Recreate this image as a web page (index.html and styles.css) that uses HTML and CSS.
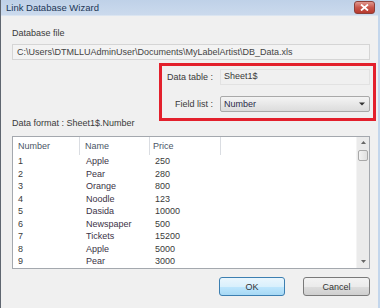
FILE: index.html
```html
<!DOCTYPE html>
<html lang="en">
<head>
    <meta charset="UTF-8">
    <title>Link Database Wizard</title>
    <link rel="stylesheet" href="styles.css">
</head>
<body>
    <div class="window">
        <!-- Title bar -->
        <div class="titlebar">
            <span class="title">Link Database Wizard</span>
            <span class="close-btn">
                <svg width="9" height="7" viewBox="0 0 9 7">
                    <path d="M1 0.5 L8 6.5 M8 0.5 L1 6.5" stroke="#fff" stroke-width="1.8"/>
                </svg>
            </span>
        </div>

        <div class="content">
            <div class="label">Database file</div>
            <div class="path-field">C:\Users\DTMLLUAdminUser\Documents\MyLabelArtist\DB_Data.xls</div>

            <!-- Source fields (highlighted) -->
            <div class="source-group">
                <div class="highlight"></div>
                <div class="form-row">
                    <label>Data table :</label>
                    <div class="text-field">Sheet1$</div>
                </div>
                <div class="form-row">
                    <label>Field list :</label>
                    <div class="select">
                        <span>Number</span>
                        <svg width="6" height="4" viewBox="0 0 6 4">
                            <path d="M0 0.5 H6 L3 3.5 Z" fill="#333"/>
                        </svg>
                    </div>
                </div>
            </div>

            <div class="label format-label">Data format : Sheet1$.Number</div>

            <!-- List view -->
            <div class="list-view">
                <div class="list-body">
                    <div class="list-header">
                        <div>Number</div>
                        <div>Name</div>
                        <div>Price</div>
                        <div></div>
                    </div>
                    <div id="rows"></div>
                </div>
                <div class="scrollbar">
                    <svg class="arrow-up" width="5" height="3" viewBox="0 0 5 3"><path d="M0 3 H5 L2.5 0 Z" fill="#666"/></svg>
                    <div class="thumb"></div>
                    <svg class="arrow-down" width="5" height="3" viewBox="0 0 5 3"><path d="M0 0 H5 L2.5 3 Z" fill="#666"/></svg>
                </div>
            </div>

            <div class="buttons">
                <button class="btn btn-default">OK</button>
                <button class="btn">Cancel</button>
            </div>
        </div>
    </div>

    <script>
        const data = [
            [1, 'Apple', 250],
            [2, 'Pear', 280],
            [3, 'Orange', 800],
            [4, 'Noodle', 123],
            [5, 'Dasida', 10000],
            [6, 'Newspaper', 500],
            [7, 'Tickets', 15200],
            [8, 'Apple', 5000],
            [9, 'Pear', 3000]
        ];

        document.getElementById('rows').innerHTML = data.map(row => `
            <div class="list-row">
                <div>${row[0]}</div>
                <div class="name">${row[1]}</div>
                <div class="price">${row[2]}</div>
                <div></div>
            </div>
        `).join('');
    </script>
</body>
</html>
```

FILE: styles.css
```css
* {
    box-sizing: border-box;
    margin: 0;
    padding: 0;
}

body {
    font-family: 'Liberation Sans', Arial, sans-serif;
    font-size: 9px;
    color: #3a3a3a;
    background-color: #f0f0f0;
}

.window {
    width: 380px;
    height: 308px;
    display: flex;
    flex-direction: column;
    border-left: 1px solid #5f6670;
    border-right: 2px solid #c3d6ec;
    background-color: #f0f0f0;
}

/* Title bar */
.titlebar {
    height: 16px;
    display: flex;
    align-items: center;
    justify-content: space-between;
    padding: 0 3px 0 5px;
    background: linear-gradient(#bfd1e8, #cbdaed);
    border-bottom: 1px solid #dbe5f1;
}

.title {
    color: #1c3657;
    font-size: 9.5px;
}

.close-btn {
    width: 21px;
    height: 13px;
    display: flex;
    align-items: center;
    justify-content: center;
    border: 1px solid #8d3f38;
    border-radius: 3px;
    background: linear-gradient(#e0988f, #c8564b 50%, #b7392e);
}

/* Content */
.content {
    flex: 1;
    display: flex;
    flex-direction: column;
    padding: 11px 8px 0 11px;
}

.label {
    height: 12px;
    line-height: 12px;
}

.path-field {
    margin-top: 5px;
    height: 16px;
    line-height: 14px;
    padding-left: 4px;
    border: 1px solid #d5d5d5;
    background-color: #f3f3f3;
    color: #444;
    white-space: nowrap;
    overflow: hidden;
}

.source-group {
    position: relative;
    display: flex;
    flex-direction: column;
    gap: 11px;
    padding-top: 9px;
}

.highlight {
    position: absolute;
    top: 3px;
    left: 147px;
    right: -6px;
    height: 58px;
    border: 3px solid #e3202c;
}

.form-row {
    display: flex;
    justify-content: flex-end;
    align-items: center;
    gap: 7px;
    height: 16px;
}

.text-field {
    width: 150px;
    height: 16px;
    line-height: 12px;
    padding-left: 3px;
    border: 1px solid #e2e2e2;
    background-color: #f0f0f0;
}

.select {
    width: 150px;
    height: 16px;
    display: flex;
    align-items: center;
    justify-content: space-between;
    padding: 0 4px 0 3px;
    border: 1px solid #a9a9a9;
    border-radius: 2px;
    background: linear-gradient(#f4f4f4, #dcdcdc);
    color: #2b2b4a;
}

.format-label {
    margin-top: 5px;
}

/* List view */
.list-view {
    margin-top: 7px;
    height: 133px;
    display: flex;
    border: 1px solid #a4a8ae;
    background-color: #fff;
}

.list-body {
    flex: 1;
}

.list-header,
.list-row {
    display: grid;
    grid-template-columns: 67px 70px 71px 1fr;
}

.list-header {
    height: 18px;
    line-height: 18px;
    color: #4a5566;
}

.list-header div {
    padding-left: 5px;
    border-right: 1px solid #dadde2;
}

.list-header div:nth-child(3) {
    padding-left: 3px;
}

.list-header div:last-child {
    border-right: 0;
}

.list-row {
    height: 12.5px;
    line-height: 12.5px;
}

.list-row div {
    padding-left: 5px;
}

.list-row .name {
    padding-left: 6px;
    color: #3c3346;
}

/* Scrollbar */
.scrollbar {
    width: 13px;
    display: flex;
    flex-direction: column;
    align-items: center;
    background-color: #ebebeb;
    border-left: 1px solid #f4f4f4;
}

.arrow-up {
    margin-top: 4px;
}

.thumb {
    margin-top: 6px;
    width: 10px;
    height: 11px;
    border: 1px solid #a8a8a8;
    border-radius: 2px;
    background: linear-gradient(90deg, #f3f3f3, #e0e0e0);
}

.arrow-down {
    margin-top: auto;
    margin-bottom: 5px;
}

/* Buttons */
.buttons {
    margin-top: 8px;
    display: flex;
    justify-content: flex-end;
    gap: 18px;
}

.btn {
    width: 67px;
    height: 19px;
    font-family: inherit;
    font-size: 9px;
    color: #333;
    border: 1px solid #7a7a7a;
    border-radius: 3px;
    background: linear-gradient(#f3f3f3, #ebebeb 50%, #dddddd 51%, #cfcfcf);
}

.btn-default {
    width: 66px;
    border-color: #3c7fb1;
    background: linear-gradient(#eaf6fd, #d9f0fc 50%, #bee6fd 51%, #a7d9f5);
}
```
